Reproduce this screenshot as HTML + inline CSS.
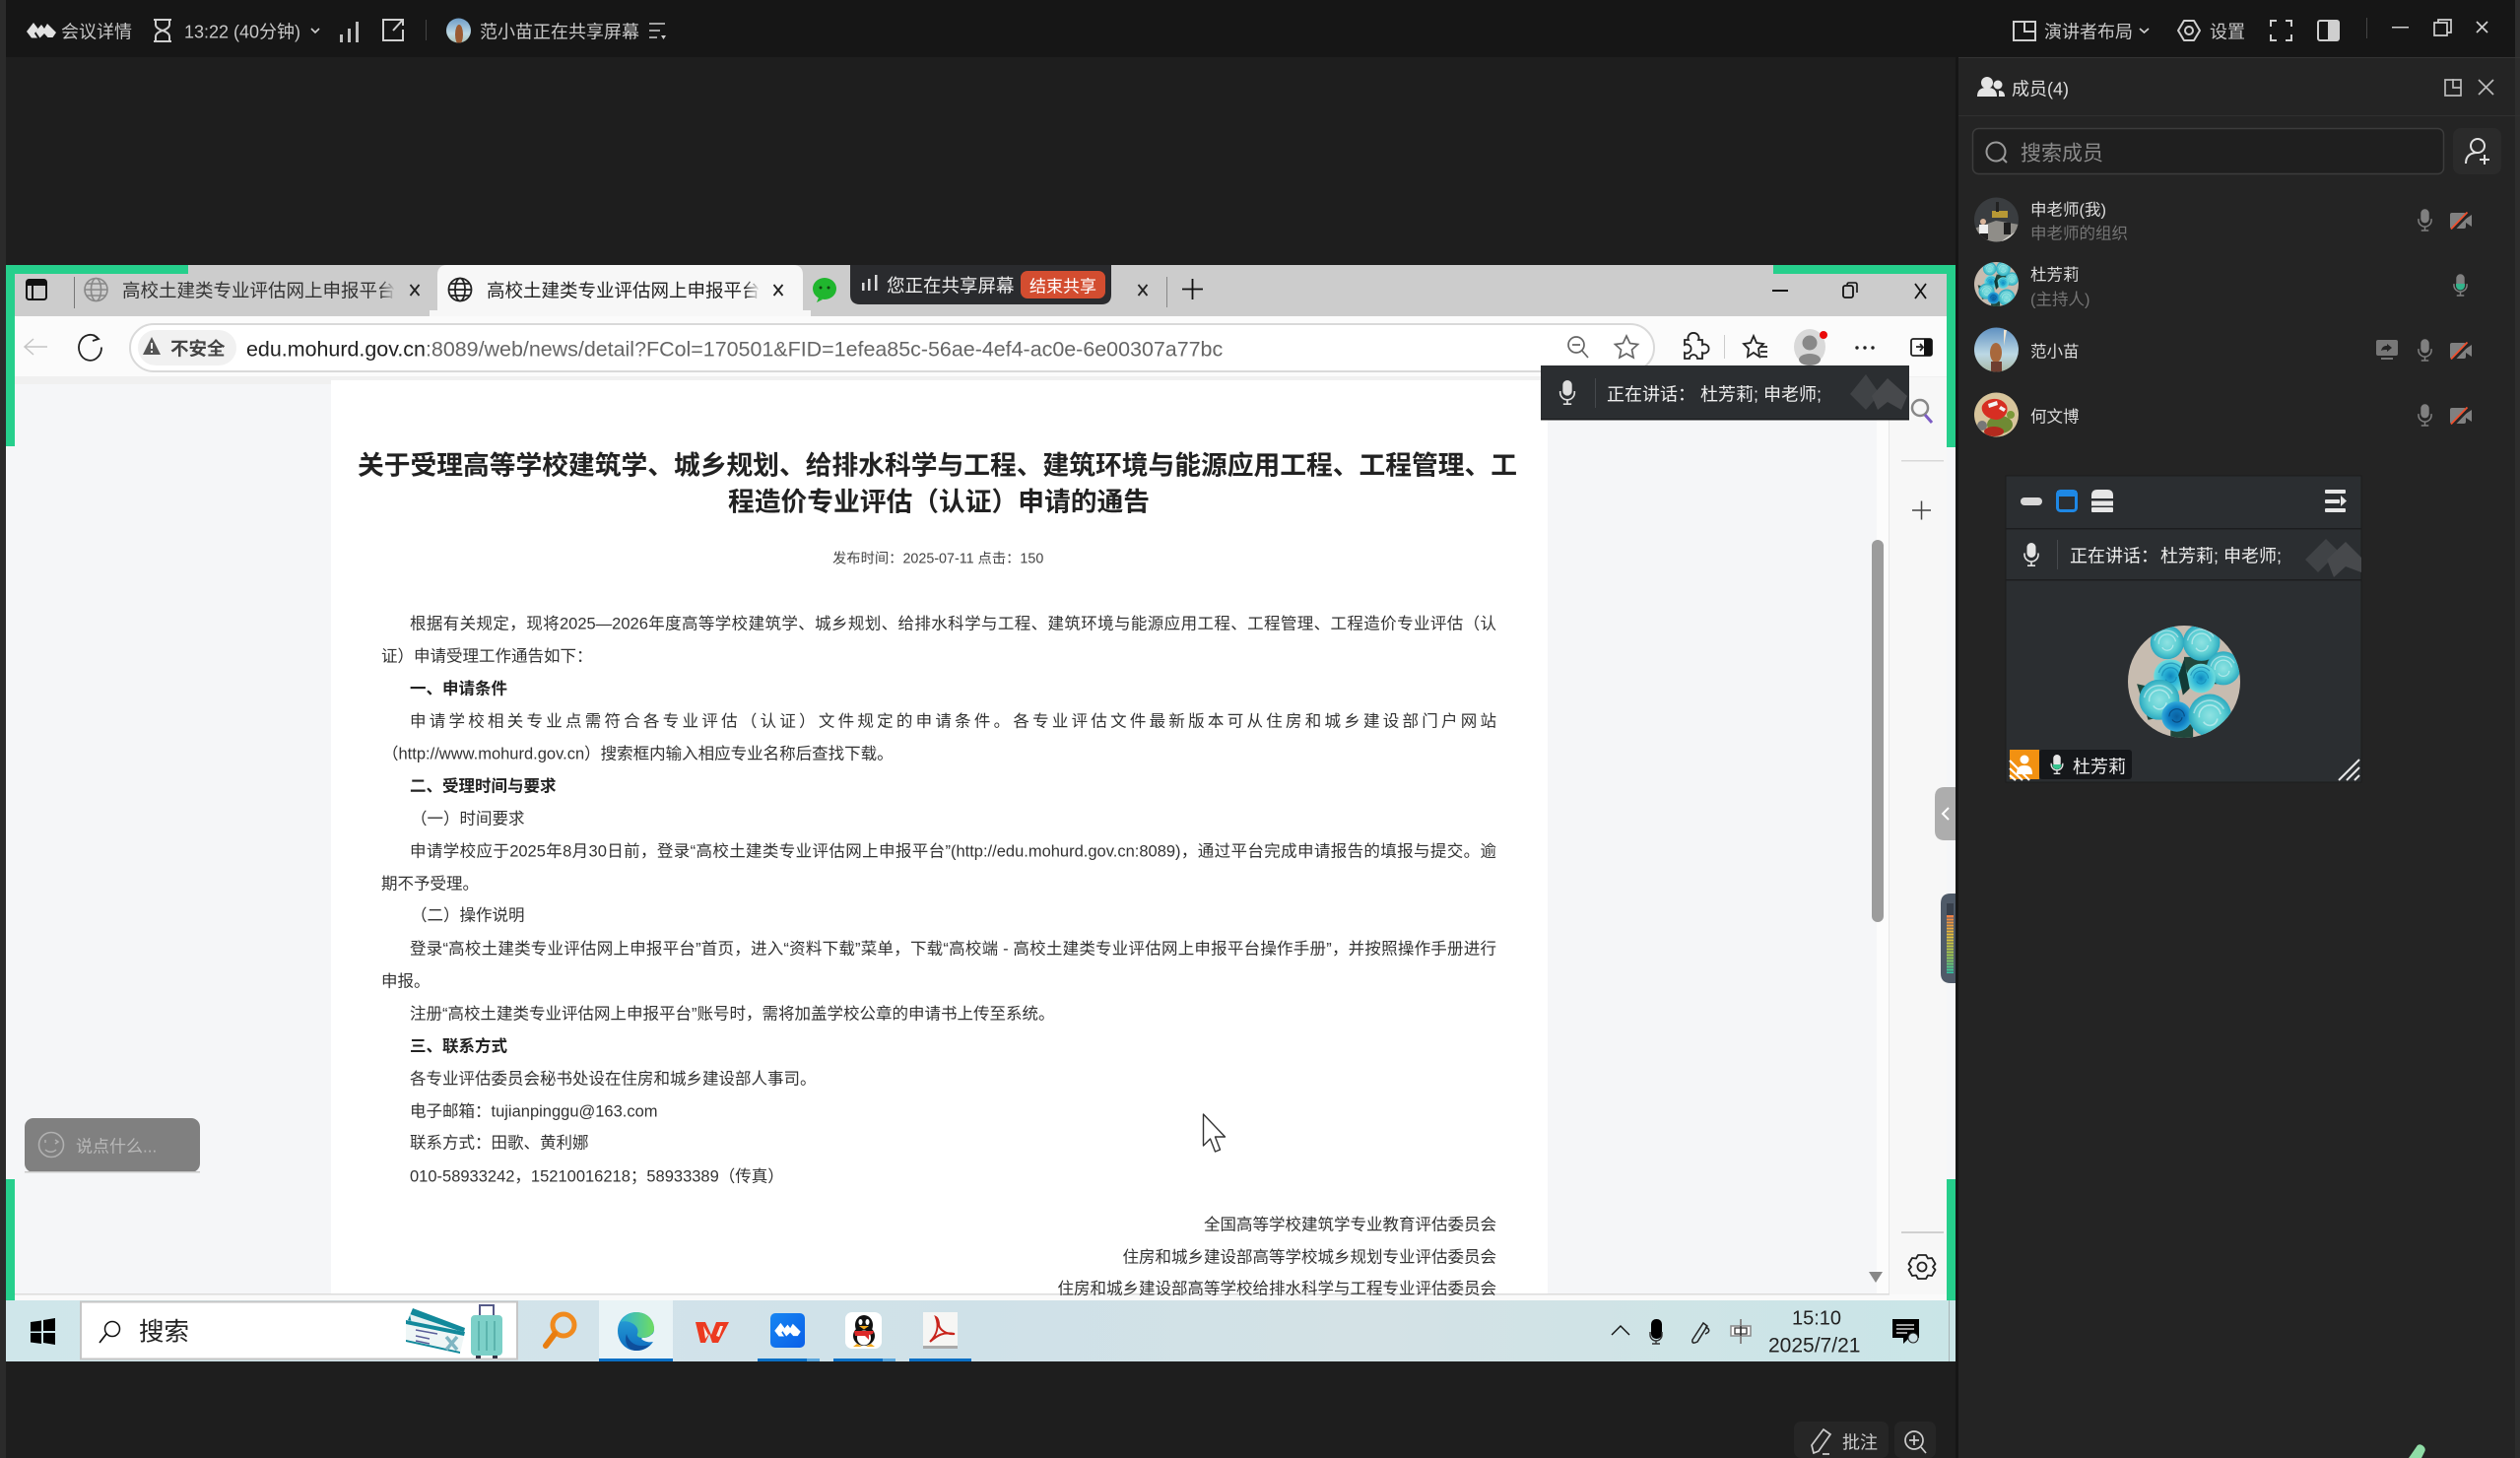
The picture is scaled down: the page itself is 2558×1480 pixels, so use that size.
<!DOCTYPE html>
<html lang="zh-CN">
<head>
<meta charset="utf-8">
<title>会议详情</title>
<style>
html,body{margin:0;padding:0;width:2558px;height:1480px;overflow:hidden;background:#1e1e1e}
body{position:relative;font-family:"Liberation Sans","Noto Sans CJK SC",sans-serif}
svg.base{position:absolute;left:0;top:0}
.t{position:absolute;white-space:nowrap;line-height:0;height:0;transform:translateY(1.500px)}
.a{font-size:16.500px;color:#333}
.j{text-align:justify;text-align-last:justify;text-justify:inter-character}
.b{font-weight:700;color:#222}
.u{color:#c8c8c8;font-size:18px}
.r{text-align:right;left:auto;right:1039px}
.f{position:absolute;top:283px;height:24px;width:18px}
</style>
</head>
<body>
<svg class="base" width="2558" height="1480" viewBox="0 0 2558 1480" xmlns="http://www.w3.org/2000/svg">
<defs>
<symbol id="mic" viewBox="0 0 16 24">
<rect x="3.500" y="0" width="9" height="15" rx="4.500" fill="currentColor"/>
<path d="M1 10.500v1.500a7 7 0 0 0 14 0v-1.500M8 19v4M4 23.200h8" fill="none" stroke="currentColor" stroke-width="1.600"/>
</symbol>
<symbol id="cam" viewBox="0 0 22 18">
<rect x="0" y="1" width="16" height="16" rx="2" fill="#808080"/>
<path d="M16 7l6-4v12l-6-4z" fill="#808080"/>
<path d="M2.500 18.500L19 1.500" stroke="#242424" stroke-width="3.600"/>
<path d="M1 17.500L17.500 .5" stroke="#f0502e" stroke-width="1.800"/>
</symbol>
<symbol id="logo" viewBox="0 0 30 17">
<path d="M0 10L7 1l4.500 6L8 12l3 4.500H5z" fill="currentColor"/>
<path d="M9 10l6-7 3 4 3-5 9 9-3.500 5h-5L18 12l-4.500 4.500z" fill="currentColor"/>
</symbol>
<radialGradient id="rg1"><stop offset="0" stop-color="#0f86bd"/><stop offset=".45" stop-color="#2cb6d8"/><stop offset="1" stop-color="#6fdcdc"/></radialGradient>
<radialGradient id="rg2"><stop offset="0" stop-color="#8fe2e2"/><stop offset=".6" stop-color="#5fd0d4"/><stop offset="1" stop-color="#2ca9c0"/></radialGradient>
<radialGradient id="rg3"><stop offset="0" stop-color="#0a5f9e"/><stop offset=".6" stop-color="#107fc4"/><stop offset="1" stop-color="#33addc"/></radialGradient>
<symbol id="r1" viewBox="0 0 40 40"><circle cx="20" cy="20" r="20" fill="url(#rg1)"/><path d="M10 20a10 10 0 0 1 20 0M14 24a7 7 0 0 0 13-3M6 16a15 15 0 0 1 26-6" fill="none" stroke="#0f7fae" stroke-width="1.500" opacity=".6"/></symbol>
<symbol id="r2" viewBox="0 0 40 40"><circle cx="20" cy="20" r="20" fill="url(#rg2)"/><path d="M10 22a10 10 0 0 1 20-3M14 26a7 7 0 0 0 13-3M5 18a15 15 0 0 1 28-4" fill="none" stroke="#fff" stroke-width="1.500" opacity=".45"/></symbol>
<symbol id="r3" viewBox="0 0 40 40"><circle cx="20" cy="20" r="20" fill="url(#rg3)"/><path d="M10 20a10 10 0 0 1 20 0M14 24a7 7 0 0 0 13-3" fill="none" stroke="#052f5c" stroke-width="1.500" opacity=".6"/></symbol>
<symbol id="roses" viewBox="0 0 100 100">
<circle cx="50" cy="50" r="50" fill="#c7bcb0"/>
<g clip-path="url(#c100)">
<path d="M8 52L36 58 38 80 18 84zM50 28h30v24H50zM38 88h20v12H38z" fill="#21473c"/>
<use href="#r2" x="19" y="0" width="32" height="30"/>
<use href="#r2" x="49" y="-2" width="33" height="34"/>
<use href="#r2" x="70" y="22" width="30" height="32"/>
<use href="#r1" x="52" y="33" width="26" height="28"/>
<use href="#r1" x="22" y="30" width="32" height="30"/>
<use href="#r2" x="10" y="48" width="36" height="36"/>
<use href="#r3" x="30" y="66" width="27" height="30"/>
<use href="#r2" x="54" y="60" width="38" height="40"/>
<path d="M50 30l5 26-6 6-4-18z" fill="#123a36"/>
</g>
</symbol>
<clipPath id="c100"><circle cx="50" cy="50" r="50"/></clipPath>
<clipPath id="av1"><circle cx="2026.500" cy="223" r="22.500"/></clipPath>
<clipPath id="av3"><circle cx="2026.500" cy="355" r="22.500"/></clipPath>
<clipPath id="av4"><circle cx="2026.500" cy="421" r="22.500"/></clipPath>
<clipPath id="avtop"><circle cx="465.500" cy="31" r="12.500"/></clipPath>
<linearGradient id="sky" x1="0" y1="0" x2="0" y2="1"><stop offset="0" stop-color="#5d8fc0"/><stop offset=".6" stop-color="#bcd8e4"/><stop offset="1" stop-color="#a8b8a4"/></linearGradient>
<linearGradient id="tb" x1="0" y1="0" x2="1" y2="0"><stop offset="0" stop-color="#cfe6ea"/><stop offset=".3" stop-color="#d2e3ea"/><stop offset=".5" stop-color="#cfe1e8"/><stop offset=".7" stop-color="#d4e2e6"/><stop offset="1" stop-color="#c9e5e7"/></linearGradient>
<linearGradient id="edge" x1="0" y1="0" x2="0" y2="1"><stop offset="0" stop-color="#2ba6d8"/><stop offset="1" stop-color="#0d6cc0"/></linearGradient>
<linearGradient id="edgetop" x1="0" y1="0" x2="1" y2="0"><stop offset="0" stop-color="#2fb4d4"/><stop offset="1" stop-color="#70dc60"/></linearGradient>
<linearGradient id="meter" x1="0" y1="0" x2="0" y2="1"><stop offset="0" stop-color="#ef7d45"/><stop offset=".35" stop-color="#e9c23a"/><stop offset=".7" stop-color="#9ccb52"/><stop offset="1" stop-color="#2dc7a6"/></linearGradient>
<linearGradient id="tm" x1="0" y1="0" x2="1" y2="1"><stop offset="0" stop-color="#1786f2"/><stop offset="1" stop-color="#0a5fe8"/></linearGradient>
</defs>

<!-- app chrome -->
<rect width="2558" height="1480" fill="#1e1e1e"/>
<rect x="0" y="0" width="6" height="1480" fill="#2b2b2b"/>
<rect x="6" y="0" width="2547" height="58" fill="#161616"/>
<rect x="2553" y="0" width="5" height="1480" fill="#2c2c2c"/>
<rect x="1985" y="58" width="3" height="1422" fill="#161616"/>
<rect x="1988" y="58" width="565" height="1422" fill="#242424"/>
<rect x="1988" y="58" width="570" height="1" fill="#333"/>
<rect x="1988" y="117" width="570" height="1" fill="#303030"/>

<!-- top left icons -->
<use href="#logo" x="27" y="22" width="30" height="17" color="#e2e2e2"/>
<g fill="none" stroke="#cfcfcf" stroke-width="2">
<path d="M156 20h18M156 42h18M158 20v5c0 4 7 6 7 6s7 2 7 6v5M172 20v5c0 4-7 6-7 6s-7 2-7 6v5"/>
<path d="M316 29l4 4 4-4" stroke-width="1.600"/>
<path d="M409 26v-6h-20v21h20v-11M399 31l9-10"/>
<path d="M659 24h16M659 31h11M659 38h8" stroke-width="1.600"/>
</g>
<path d="M671 36l5 0-2.500 4z" fill="#cfcfcf"/>
<g fill="#bdbdbd"><rect x="345" y="35" width="3" height="8"/><rect x="353" y="29" width="3" height="14"/><rect x="361" y="22" width="3" height="21"/></g>
<rect x="432" y="20" width="1" height="21" fill="#444"/>
<g clip-path="url(#avtop)"><rect x="450" y="15" width="32" height="32" fill="url(#sky)"/><ellipse cx="466" cy="35" rx="4" ry="10" fill="#9a5a32"/></g>

<!-- top right icons -->
<g fill="none" stroke="#cfcfcf" stroke-width="2">
<path d="M2044 22h22v19h-22zM2055 22v10h11"/>
<path d="M2172 29l4.500 4 4.500-4" stroke-width="1.700"/>
<circle cx="2222" cy="31" r="4"/>
<path d="M2217 21h10l6 10-6 10h-10l-6-10z" stroke-linejoin="round"/>
<path d="M2305 27v-6h6M2320 21h6v6M2326 35v6h-6M2311 41h-6v-6"/>
<rect x="2353" y="21" width="21" height="20" rx="2"/>
<path d="M2471 23h13v13h-13zM2475 23v-3h13v13h-4" stroke-width="1.700"/>
<path d="M2514 22l11 11M2525 22l-11 11" stroke-width="1.700"/>
</g>
<rect x="2363" y="22" width="10" height="18" fill="#cfcfcf"/>
<rect x="2402" y="18" width="1" height="21" fill="#444"/>
<rect x="2428" y="27" width="17" height="1.500" fill="#cfcfcf"/>

<!-- member panel -->
<g fill="#e4e4e4">
<circle cx="2017" cy="84" r="6"/><path d="M2007 98c0-7 4-9 10-9s10 2 10 9z"/>
<circle cx="2028" cy="86" r="4.500"/><path d="M2029 92c4 0 6 2 6 6h-6z"/>
</g>
<g fill="none" stroke="#bbb" stroke-width="1.700">
<path d="M2482 81h16v16h-16zM2490 80v9h8"/>
<path d="M2516 81l15 15M2531 81l-15 15"/>
</g>
<rect x="2002.500" y="130.500" width="478" height="46" rx="6" fill="#1f1f1f" stroke="#3c3c3c" stroke-width="1.500"/>
<circle cx="2026" cy="154" r="9.500" fill="none" stroke="#9a9a9a" stroke-width="2"/>
<path d="M2033 161l4 4" stroke="#9a9a9a" stroke-width="2"/>
<rect x="2490" y="130" width="49" height="47" rx="8" fill="#2b2b2b"/>
<g fill="none" stroke="#e0e0e0" stroke-width="2">
<circle cx="2515" cy="148" r="7"/><path d="M2503 166c0-8 5-11 12-11"/><path d="M2517 162h10M2522 157v10"/>
</g>
<g clip-path="url(#av1)">
<rect x="2004" y="200" width="46" height="46" fill="#3a3d40"/>
<path d="M2004 232l22-8 24 4v18h-46z" fill="#8f8d88"/>
<path d="M2030 246l20-14v14z" fill="#d8d6d0"/>
<rect x="2022" y="214" width="16" height="7" fill="#b79835"/>
<rect x="2026" y="205" width="3" height="10" fill="#222"/>
<circle cx="2013" cy="225" r="3" fill="#d9b49a"/><rect x="2009" y="228" width="9" height="9" fill="#efefef"/><rect x="2010" y="237" width="8" height="6" fill="#222"/>
<rect x="2034" y="226" width="7" height="12" fill="#1f1f1f"/>
</g>
<use href="#roses" x="2004" y="266" width="45" height="45"/>
<g clip-path="url(#av3)">
<rect x="2004" y="332" width="46" height="46" fill="url(#sky)"/>
<ellipse cx="2026" cy="358" rx="6" ry="10" fill="#a8683c"/>
<rect x="2021" y="367" width="11" height="12" fill="#6e3e30"/>
<path d="M2034 335l3 0-3 16z" fill="#efe4d0"/>
</g>
<g clip-path="url(#av4)">
<rect x="2004" y="398" width="46" height="46" fill="#d8c59c"/>
<ellipse cx="2030" cy="431" rx="13" ry="9" fill="#6f8a34"/>
<ellipse cx="2024" cy="438" rx="10" ry="5" fill="#b32a1e"/>
<path d="M2012 412c4-9 20-10 25 0 2 6-2 13-10 14-8 0-17-6-15-14z" fill="#d72e22"/>
<path d="M2018 410l9-3 1 4-9 3zM2031 412l5 3-2 3-5-3z" fill="#f3f3f3"/>
<circle cx="2012" cy="432" r="5" fill="#777"/>
<circle cx="2041" cy="421" r="4" fill="#7c9a3a"/>
</g>
<use href="#mic" x="2454" y="212" width="15" height="23" color="#808080"/>
<use href="#cam" x="2487" y="215" width="22" height="18"/>
<use href="#mic" x="2490" y="278" width="15" height="23" color="#808080"/>
<path d="M2493 288h9v2a4.500 4.500 0 0 1-9 0z" fill="#34b48c"/>
<rect x="2412" y="345" width="22" height="16" rx="2" fill="#777"/>
<rect x="2417" y="363" width="12" height="2" fill="#777"/>
<path d="M2417 356c1-4 3-5 6-5v-2l5 4-5 4v-2c-2 0-4 0-6 1z" fill="#242424"/>
<use href="#mic" x="2454" y="344" width="15" height="23" color="#808080"/>
<use href="#cam" x="2487" y="347" width="22" height="18"/>
<use href="#mic" x="2454" y="410" width="15" height="23" color="#808080"/>
<use href="#cam" x="2487" y="413" width="22" height="18"/>

<!-- floating window -->
<rect x="2036" y="483" width="361" height="311" fill="#2b2e31" stroke="#1d1d1d"/>
<rect x="2036" y="536" width="361" height="1.500" fill="#1c1d1f"/>
<rect x="2036" y="588" width="361" height="1.500" fill="#1c1d1f"/>
<rect x="2051" y="505" width="22" height="8" rx="4" fill="#d8d8d8"/>
<rect x="2088.500" y="498.500" width="19" height="20" rx="3" fill="none" stroke="#1e88e5" stroke-width="3"/>
<rect x="2088" y="498" width="20" height="6" fill="#1e88e5"/>
<g fill="#e6e6e6"><path d="M2123 506v-3q0-6 6-6h10q6 0 6 6v3z"/><rect x="2123" y="508.500" width="22" height="5"/><rect x="2123" y="515" width="22" height="5" rx="1"/>
<rect x="2360" y="497" width="21" height="4" rx="1"/><rect x="2360" y="507" width="15" height="4" rx="1"/><path d="M2376 503l6 5.500-6 5.500z"/><rect x="2360" y="516" width="21" height="4" rx="1"/></g>
<use href="#mic" x="2053" y="551" width="18" height="24" color="#e4e4e4"/>
<rect x="2088" y="548" width="1" height="30" fill="#46494d"/>
<g fill="#404346"><path d="M2340 568l21-21 13 13-21 21z"/><path d="M2362 568l19-18 16 16v15l-16-6-12 11z" fill="#47494c"/></g>
<use href="#roses" x="2160" y="635" width="114" height="114"/>
<rect x="2070" y="761" width="94" height="30" rx="3" fill="#15171a"/>
<rect x="2040" y="761" width="30" height="30" fill="#f29111"/>
<circle cx="2055" cy="771" r="4.500" fill="#fff"/>
<path d="M2047 786c0-7 3-9 8-9s8 2 8 9z" fill="#fff"/>
<path d="M2040 772l20 20M2040 780l13 12M2040 787l6 5" stroke="#fff" stroke-width="2.200" fill="none"/>
<use href="#mic" x="2081" y="766" width="14" height="20" color="#e6e6e6"/>
<path d="M2083.500 776h9v.5a4.500 4.500 0 0 1-9 0z" fill="#37c48f"/>
<path d="M2374 792l21-21M2382 792l13-13M2390 792l5-5" stroke="#e8e8e8" stroke-width="2" fill="none"/>

<!-- shared browser -->
<rect x="6" y="269" width="1979" height="1113" fill="#f5f6f8"/>
<rect x="6" y="269" width="1979" height="52" fill="#cccccc"/>
<rect x="6" y="321" width="1979" height="61" fill="#fbfbfb"/>
<rect x="15" y="382" width="1961" height="8" fill="#f0f0f0"/>
<rect x="336" y="383" width="1235" height="931" fill="#ffffff"/>
<rect x="336" y="383" width="1235" height="3" fill="#f1f1f1"/>
<rect x="1917" y="383" width="1" height="931" fill="#e6e6e6"/>
<rect x="1905" y="390" width="12" height="925" fill="#fcfcfc"/>
<rect x="1900" y="548" width="12" height="388" rx="6" fill="#9c9c9c"/>
<path d="M1897 1291h14l-7 11z" fill="#888"/>
<rect x="1918" y="383" width="58" height="931" fill="#f7f7f7"/>
<rect x="1930" y="467" width="43" height="1.500" fill="#d8d8d8"/>
<rect x="1930" y="1250" width="43" height="2" fill="#d0d0d0"/>
<rect x="6" y="1314" width="1979" height="6" fill="#fafafa"/>
<rect x="15" y="1313" width="1903" height="1.500" fill="#dcdcdc"/>

<!-- tabs -->
<g fill="none" stroke="#111" stroke-width="2">
<rect x="27" y="284" width="20" height="20" rx="2.500"/>
</g>
<rect x="27" y="284" width="20" height="6" fill="#111"/>
<rect x="32" y="290" width="2" height="14" fill="#111"/>
<rect x="75" y="281" width="1" height="32" fill="#777"/>
<g fill="none" stroke="#888" stroke-width="1.600">
<circle cx="97.500" cy="294" r="11.500"/><ellipse cx="97.500" cy="294" rx="5" ry="11.500"/><path d="M86 294h23M88 288h19M88 300h19"/>
<path d="M416.500 289l9 11M425.500 289l-9 11" stroke="#222" stroke-width="1.800"/>
</g>
<path d="M444 321v-42q0-10 10-10h351q10 0 10 10v42z" fill="#f7f7f7"/>
<rect x="436" y="315" width="387" height="6" fill="#f7f7f7"/>
<g fill="none" stroke="#222" stroke-width="1.800">
<circle cx="467" cy="294" r="11.500"/><ellipse cx="467" cy="294" rx="5" ry="11.500"/><path d="M455.500 294h23M458 288h18M458 300h18"/>
<path d="M785.500 289l9 11M794.500 289l-9 11"/>
<path d="M1155.500 289l9 11M1164.500 289l-9 11"/>
</g>
<ellipse cx="837" cy="293" rx="12" ry="11" fill="#20b62e"/>
<path d="M831 302l-2 5 6-3z" fill="#20b62e"/>
<circle cx="833" cy="292" r="1.500" fill="#10430f"/><circle cx="841" cy="292" r="1.500" fill="#10430f"/>
<rect x="1184" y="281" width="1" height="31" fill="#888"/>
<path d="M1200 293.500h21M1210.500 283v21" stroke="#111" stroke-width="1.800"/>
<rect x="1799" y="294" width="16" height="2" fill="#111"/>
<rect x="1871" y="290" width="10" height="12" rx="2" fill="none" stroke="#111" stroke-width="1.800"/>
<path d="M1875 289q0-2 2-2h6q2 0 2 2v8" fill="none" stroke="#111" stroke-width="1.600"/>
<path d="M1944 288l11 15M1955 288l-11 15" stroke="#111" stroke-width="1.800"/>
<path d="M863 269h265v30q0 10-10 10H873q-10 0-10-10z" fill="#2a2b2e"/>
<g fill="#dadada"><rect x="875" y="287" width="2.500" height="8"/><rect x="881" y="283" width="2.500" height="12"/><rect x="888" y="279" width="2.500" height="16"/></g>
<rect x="1036" y="275" width="86" height="28" rx="7" fill="#d34d30"/>

<!-- toolbar -->
<path d="M48 352H26M34 344l-9 8 9 8" fill="none" stroke="#c4c4c4" stroke-width="1.500"/>
<path d="M99 343a11.500 13 0 1 0 4 9.500M95 340l5 4-6 2" fill="none" stroke="#222" stroke-width="1.800"/>
<rect x="132" y="329" width="1547" height="48" rx="24" fill="#fff" stroke="#d9d9d9" stroke-width="2"/>
<rect x="140" y="335" width="100" height="36" rx="18" fill="#f1f1f1"/>
<path d="M154 342l9 18h-18z" fill="#555"/>
<rect x="153" y="348" width="2" height="6" fill="#f1f1f1"/><rect x="153" y="356" width="2" height="2" fill="#f1f1f1"/>
<g fill="none" stroke="#666" stroke-width="1.700">
<circle cx="1600" cy="350" r="8"/><path d="M1606 356l6 7M1596 350h8"/>
<path d="M1651 341l3.500 7.500 8 1-6 5.500 1.600 8-7.100-4-7.100 4 1.600-8-6-5.500 8-1z"/>
</g>
<g fill="none" stroke="#222" stroke-width="1.800">
<path d="M1714 345a5.500 5 0 1 1 10 0h4v5a4.500 4.500 0 1 1 0 8v6h-5a4 4 0 1 0-8 0h-5v-6a4.500 4.500 0 1 0 0-8v-5z"/>
<path d="M1780 341l3 7 7 1-5 5 1 8-6-4-6 4 1-8-5-5 7-1z"/>
<path d="M1787 352h7M1787 357h7M1787 362h7"/>
<rect x="1940" y="344" width="21" height="17" rx="2"/>
<path d="M1945 352h6M1949 349l3 3.500-3 3.500"/>
</g>
<rect x="1953" y="344" width="8" height="17" fill="#111"/>
<rect x="1750" y="340" width="1" height="24" fill="#ccc"/>
<ellipse cx="1837" cy="352" rx="16" ry="18" fill="#d9d9d9"/>
<circle cx="1837" cy="348" r="7.500" fill="#888"/><ellipse cx="1837" cy="365" rx="11" ry="6" fill="#888"/>
<circle cx="1851" cy="340" r="4" fill="#ea0a0a"/>
<g fill="#222"><circle cx="1885" cy="353" r="1.700"/><circle cx="1893" cy="353" r="1.700"/><circle cx="1901" cy="353" r="1.700"/></g>

<!-- sidebar -->
<circle cx="1949" cy="414" r="8" fill="none" stroke="#888" stroke-width="2.500"/>
<path d="M1954 421l7 8" stroke="#7c5cc4" stroke-width="3"/>
<path d="M1941 518h19M1950.500 508.500v19" stroke="#444" stroke-width="1.500"/>
<g fill="none" stroke="#222" stroke-width="1.800"><circle cx="1951" cy="1286" r="4.500"/>
<path d="M1947 1274h8l2 3.500 4-.5 3.500 6-2.500 3 2.500 3-3.500 6-4-.5-2 3.500h-8l-2-3.500-4 .5-3.500-6 2.500-3-2.500-3 3.500-6 4 .5z" stroke-linejoin="round"/></g>
<path d="M1964 809q0-10 10-10h11v54h-11q-10 0-10-10z" fill="#adadad"/>
<path d="M1978 820l-6 6 6 6" fill="none" stroke="#fff" stroke-width="2"/>
<path d="M1970 917q0-10 10-10h5v91h-5q-10 0-10-10z" fill="#4f5a68"/>
<rect x="1976" y="917" width="7" height="12" fill="#38404c"/>
<rect x="1976" y="929" width="7" height="59" fill="url(#meter)"/>
<path d="M1976 932h7M1976 935h7M1976 938h7M1976 941h7M1976 944h7M1976 947h7M1976 950h7M1976 953h7M1976 956h7M1976 959h7M1976 962h7M1976 965h7M1976 968h7M1976 971h7M1976 974h7M1976 977h7M1976 980h7M1976 983h7M1976 986h7" stroke="#4f5a68" stroke-width="1"/>

<!-- tooltip -->
<rect x="1564" y="371" width="374" height="55" fill="#2b2e31"/>
<rect x="1564" y="425" width="374" height="1.500" fill="#17181a"/>
<use href="#mic" x="1582" y="386" width="18" height="25" color="#dedede"/>
<rect x="1619" y="384" width="1" height="30" fill="#46494d"/>
<g fill="#404346"><path d="M1878 400l16-20 14 20-14 16z"/><path d="M1900 402l16-18 20 18-6 14-14-8-10 8z" fill="#47494c"/></g>

<!-- chat pill -->
<rect x="25" y="1135" width="178" height="55" rx="9" fill="#808080"/>
<rect x="25" y="1189" width="178" height="1.500" fill="#c9c9c9"/>
<circle cx="52" cy="1162" r="12.500" fill="none" stroke="#b0b0b0" stroke-width="1.600"/>
<g fill="none" stroke="#b0b0b0" stroke-width="1.500"><path d="M46 1157v3M56 1157l3 2-3 2M46 1167c3 3 8 3 11 0"/></g>

<!-- cursor -->
<path d="M1221.500 1131v32l7-7 5 13 5-2-5-13h10z" fill="#fff" stroke="#333" stroke-width="1.400" stroke-linejoin="round"/>

<!-- taskbar -->
<rect x="6" y="1320" width="1979" height="62" fill="url(#tb)"/>
<g fill="#000"><path d="M31 1342l11-1.500v11H31z"/><path d="M44 1340l12-2v13H44z"/><path d="M31 1353h11v11l-11-1.500z"/><path d="M44 1353h12v12l-12-2z"/></g>
<rect x="82" y="1321.500" width="443" height="58" fill="#fff" stroke="#c6c6c6" stroke-width="2"/>
<circle cx="114" cy="1349" r="7.500" fill="none" stroke="#111" stroke-width="1.500"/>
<path d="M108 1354l-7 9" stroke="#111" stroke-width="1.700"/>
<g>
<path d="M419 1328l53 20-2 8-56-16z" fill="#12899b"/>
<path d="M416 1334l50 17-48-7z" fill="#e6f1f2"/>
<path d="M412 1340l60 12-5 22-55-12z" fill="#eef6f6"/>
<path d="M412 1340l60 12-1 4-59-12z" fill="#12899b"/>
<path d="M412 1360l55 12v2l-55-12z" fill="#12899b"/>
<path d="M422 1350l22 4M422 1356l14 3M422 1361l14 3" stroke="#5a5f9a" stroke-width="1.500"/>
<path d="M453 1357l11 13M464 1357l-11 13" stroke="#7fb5c2" stroke-width="3.500"/>
<rect x="478" y="1335" width="32" height="41" rx="4" fill="#7cd0c8"/>
<path d="M487 1335v-10h14v10" fill="none" stroke="#555a88" stroke-width="2"/>
<path d="M486 1341v30M494 1341v30M502 1341v30" stroke="#52aaa4" stroke-width="1.500"/>
<rect x="483" y="1376" width="5" height="3" fill="#334"/><rect x="500" y="1376" width="5" height="3" fill="#334"/>
</g>
<rect x="608" y="1320" width="75" height="62" fill="#e9f3f6"/>
<rect x="608" y="1379" width="75" height="3" fill="#0a6fc4"/>
<rect x="769" y="1379" width="50" height="3" fill="#0a6fc4"/><rect x="819" y="1379" width="13" height="3" fill="#5aa6dc"/>
<rect x="846" y="1379" width="50" height="3" fill="#0a6fc4"/><rect x="896" y="1379" width="13" height="3" fill="#5aa6dc"/>
<rect x="923" y="1379" width="63" height="3" fill="#0a6fc4"/>
<circle cx="572" cy="1345" r="11" fill="none" stroke="#f08a1e" stroke-width="5"/>
<path d="M563 1354l-9 12" stroke="#e87d10" stroke-width="6" stroke-linecap="round"/>
<path d="M627 1351c0-11 8-19 19-19 10 0 18 7 18 17 0 3-1 5-3 6-2 2-5 3-9 3l-1 1c3 3 8 4 12 3-4 6-10 9-17 9-11 0-19-9-19-20z" fill="url(#edge)"/>
<path d="M630 1342c3-6 9-10 16-10 10 0 18 7 18 17 0 5-6 9-12 9-4 0-6-2-5-4 2-5-2-10-8-12-4-1-7-1-9 0z" fill="url(#edgetop)"/>
<path d="M636 1354c2 8 10 15 24 11-4 4-9 6-14 6-8 0-13-8-10-17z" fill="#0e4f9c"/>
<path d="M706 1342h10l6 13 5-13h13l-11 21h-6l-3-9-4 9h-5z" fill="#ec3a20"/>
<path d="M714 1346l5 9-3 4zM731 1346l-4 10 3 1 4-11z" fill="#f7ece6"/>
<rect x="782" y="1333" width="35" height="35" rx="5" fill="url(#tm)"/>
<use href="#logo" x="786" y="1342" width="27" height="15" color="#fff"/>
<rect x="858" y="1332" width="37" height="37" rx="7" fill="#fff"/>
<ellipse cx="877" cy="1345" rx="9" ry="10" fill="#111"/>
<ellipse cx="877" cy="1356" rx="11" ry="10" fill="#111"/>
<ellipse cx="877" cy="1358" rx="7" ry="7.500" fill="#fff"/>
<ellipse cx="873.500" cy="1342" rx="2" ry="3" fill="#fff"/><ellipse cx="880.500" cy="1342" rx="2" ry="3" fill="#fff"/>
<path d="M867 1351h20l-1 3-4 1v5l-4-4h-10z" fill="#dc2a2a"/>
<path d="M872 1346h10l-5 3.500z" fill="#f3a81a"/>
<path d="M870 1364l-4 3h9zM884 1364l4 3h-9z" fill="#f3a81a"/>
<rect x="937" y="1332" width="35" height="36" fill="#f6f6f4"/>
<rect x="937" y="1366" width="35" height="3" fill="#aaa"/>
<path d="M950 1337c3 8 2 17-6 25 8-7 13-10 25-8-8 1-15-4-16-9 0-3-1-7-3-8z" fill="none" stroke="#c8241c" stroke-width="2"/>
<path d="M1636 1355l9-9 9 9" fill="none" stroke="#111" stroke-width="1.400"/>
<rect x="1676" y="1339" width="11" height="20" rx="5" fill="#000"/>
<path d="M1675 1352v3a6 6 0 0 0 12 0v-3M1681 1361v3M1677 1364h8" fill="none" stroke="#333" stroke-width="1.400"/>
<g fill="none" stroke="#222" stroke-width="1.500">
<path d="M1718 1360l11-17 4 3-10 16q-6 3-5-2z"/><path d="M1731 1347c5 2 5 5 0 7"/>
<rect x="1757" y="1346" width="20" height="10" fill="#fff" stroke="#888"/>
<path d="M1767 1339v25" stroke="#888" stroke-width="2"/><path d="M1761 1348h12v6h-12z" stroke-width="1.300" stroke="#333"/>
<path d="M1767 1346v10" stroke-width="1.300" stroke="#333"/>
</g>
<path d="M1921 1339h27v19h-10l-6 6v-6h-11z" fill="#000"/>
<path d="M1925 1345h18M1925 1349h18M1925 1353h11" stroke="#fff" stroke-width="1.200"/>
<circle cx="1942" cy="1358" r="5" fill="#ccdfe4" stroke="#222"/>
<rect x="1978" y="1320" width="1" height="62" fill="#a8b4b6"/>

<!-- green border -->
<g fill="#26cf8c">
<rect x="6" y="269" width="185" height="9"/><rect x="6" y="269" width="9" height="184"/>
<rect x="1800" y="269" width="185" height="9"/><rect x="1976" y="269" width="9" height="185"/>
<rect x="6" y="1197" width="9" height="123"/><rect x="1976" y="1197" width="9" height="123"/>
</g>

<!-- bottom right -->
<rect x="1821" y="1443" width="96" height="37" rx="7" fill="#262626"/>
<rect x="1923" y="1443" width="42" height="37" rx="7" fill="#262626"/>
<g fill="none" stroke="#ccc" stroke-width="1.700">
<path d="M1841 1475l-2-8 12-16 7 5-12 17zM1850 1476h7"/>
<circle cx="1943" cy="1462" r="9"/><path d="M1943 1457v10M1938 1462h10M1950 1469l5 6"/>
</g>
<path d="M2445 1480l9-13q3-2 6 1 3 3 1 6l-3 6z" fill="#8fdca6"/>
</svg>

<!-- top bar text -->
<div class="t u" style="left:62px;top:31px">会议详情</div>
<div class="t u" style="left:187px;top:31px">13:22 (40分钟)</div>
<div class="t u" style="left:487px;top:31px">范小苗正在共享屏幕</div>
<div class="t u" style="left:2075px;top:31px">演讲者布局</div>
<div class="t u" style="left:2243px;top:31px">设置</div>

<!-- panel text -->
<div class="t" style="left:2042px;top:89px;font-size:18px;color:#ddd">成员(4)</div>
<div class="t" style="left:2051px;top:155px;font-size:21px;color:#8a8a8a">搜索成员</div>
<div class="t" style="left:2061px;top:212px;font-size:16.500px;color:#ddd">申老师(我)</div>
<div class="t" style="left:2061px;top:236px;font-size:16.500px;color:#757575">申老师的组织</div>
<div class="t" style="left:2061px;top:278px;font-size:16.500px;color:#ddd">杜芳莉</div>
<div class="t" style="left:2061px;top:303px;font-size:16.500px;color:#757575">(主持人)</div>
<div class="t" style="left:2061px;top:356px;font-size:16.500px;color:#ddd">范小苗</div>
<div class="t" style="left:2061px;top:422px;font-size:16.500px;color:#ddd">何文博</div>

<!-- floating window text -->
<div class="t" style="left:2101px;top:563px;font-size:18px;color:#eee">正在讲话：</div>
<div class="t" style="left:2193px;top:563px;font-size:18px;color:#eee">杜芳莉; 申老师;</div>
<div class="t" style="left:2104px;top:777px;font-size:18px;color:#eee">杜芳莉</div>

<!-- browser tabs -->
<div class="t" style="left:124px;top:294px;font-size:18.500px;color:#333">高校土建类专业评估网上申报平台</div>
<div class="f" style="left:386px;background:linear-gradient(90deg,rgba(204,204,204,0),#ccc 85%)"></div>
<div class="t" style="left:494px;top:294px;font-size:18.500px;color:#222">高校土建类专业评估网上申报平台</div>
<div class="f" style="left:756px;background:linear-gradient(90deg,rgba(247,247,247,0),#f7f7f7 85%)"></div>
<div class="t" style="left:900px;top:289px;font-size:18.500px;color:#eee">您正在共享屏幕</div>
<div class="t" style="left:1045px;top:290px;font-size:17px;color:#fff">结束共享</div>
<div class="t" style="left:173px;top:353px;font-size:18.500px;color:#444;font-weight:700">不安全</div>
<div class="t" style="left:250px;top:353px;font-size:21.450px;color:#666"><span style="color:#222">edu.mohurd.gov.cn</span>:8089/web/news/detail?FCol=170501&amp;FID=1efea85c-56ae-4ef4-ac0e-6e00307a77bc</div>
<div class="t" style="left:1631px;top:399px;font-size:18px;color:#eee">正在讲话：</div>
<div class="t" style="left:1726px;top:399px;font-size:18px;color:#eee">杜芳莉; 申老师;</div>

<!-- article -->
<div class="t b" style="left:363px;top:471px;font-size:26.750px;color:#222">关于受理高等学校建筑学、城乡规划、给排水科学与工程、建筑环境与能源应用工程、工程管理、工</div>
<div class="t b" style="left:739px;top:508px;font-size:26.750px;color:#222">程造价专业评估（认证）申请的通告</div>
<div class="t" style="left:845px;top:566px;font-size:14.300px;color:#444">发布时间：2025-07-11 点击：150</div>

<div class="t a j" style="left:416px;top:632px;width:1103px">根据有关规定，现将2025—2026年度高等学校建筑学、城乡规划、给排水科学与工程、建筑环境与能源应用工程、工程管理、工程造价专业评估（认</div>
<div class="t a" style="left:387px;top:665px">证）申请受理工作通告如下：</div>
<div class="t a b" style="left:416px;top:698px">一、申请条件</div>
<div class="t a j" style="left:416px;top:731px;width:1103px">申请学校相关专业点需符合各专业评估（认证）文件规定的申请条件。各专业评估文件最新版本可从住房和城乡建设部门户网站</div>
<div class="t a" style="left:388px;top:764px">（http://www.mohurd.gov.cn）搜索框内输入相应专业名称后查找下载。</div>
<div class="t a b" style="left:416px;top:797px">二、受理时间与要求</div>
<div class="t a" style="left:417px;top:830px">（一）时间要求</div>
<div class="t a j" style="left:416px;top:863px;width:1103px">申请学校应于2025年8月30日前，登录“高校土建类专业评估网上申报平台”(http://edu.mohurd.gov.cn:8089)，通过平台完成申请报告的填报与提交。逾</div>
<div class="t a" style="left:387px;top:896px">期不予受理。</div>
<div class="t a" style="left:417px;top:928px">（二）操作说明</div>
<div class="t a j" style="left:416px;top:962px;width:1103px">登录“高校土建类专业评估网上申报平台”首页，进入“资料下载”菜单，下载“高校端 - 高校土建类专业评估网上申报平台操作手册”，并按照操作手册进行</div>
<div class="t a" style="left:387px;top:995px">申报。</div>
<div class="t a" style="left:416px;top:1028px">注册“高校土建类专业评估网上申报平台”账号时，需将加盖学校公章的申请书上传至系统。</div>
<div class="t a b" style="left:416px;top:1061px">三、联系方式</div>
<div class="t a" style="left:416px;top:1094px">各专业评估委员会秘书处设在住房和城乡建设部人事司。</div>
<div class="t a" style="left:416px;top:1127px">电子邮箱：tujianpinggu@163.com</div>
<div class="t a" style="left:416px;top:1159px">联系方式：田歌、黄利娜</div>
<div class="t a" style="left:416px;top:1193px">010-58933242，15210016218；58933389（传真）</div>
<div class="t a r" style="top:1242px">全国高等学校建筑学专业教育评估委员会</div>
<div class="t a r" style="top:1275px">住房和城乡建设部高等学校城乡规划专业评估委员会</div>
<div class="t a r" style="top:1307px">住房和城乡建设部高等学校给排水科学与工程专业评估委员会</div>

<div class="t" style="left:77px;top:1163px;font-size:17px;color:#b8b8b8">说点什么...</div>

<!-- taskbar text -->
<div class="t" style="left:141px;top:1351px;font-size:25.500px;color:#222">搜索</div>
<div class="t" style="left:1819px;top:1337px;font-size:20px;color:#222">15:10</div>
<div class="t" style="left:1795px;top:1365px;font-size:21px;color:#222">2025/7/21</div>
<div class="t" style="left:1870px;top:1463px;font-size:18px;color:#ccc">批注</div>
</body>
</html>
